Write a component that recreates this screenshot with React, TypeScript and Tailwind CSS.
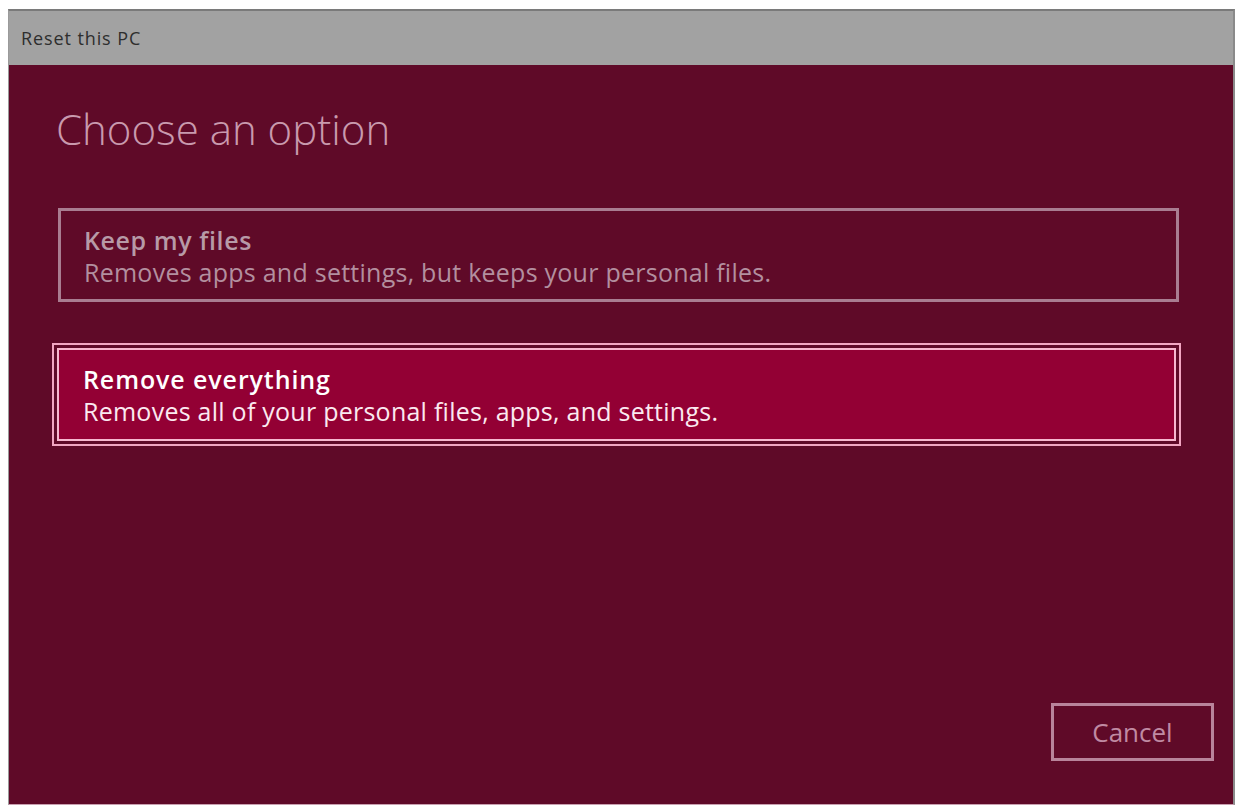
export default function App() {
  return (
    <div className="w-[1237px] h-[807px] bg-white pt-[9px] pl-[8px] pr-[2px] pb-[2px]" style={{ fontFamily: '"Open Sans", "Noto Sans", sans-serif' }}>
      <div className="w-full h-full flex flex-col border-t-2 border-[#7a7a7a] border-l border-r-2 border-r-[#8a8a8a] border-l-[#9a9a9a] border-b border-b-[#c9a0b0]">
        {/* title bar */}
        <div className="h-[54px] shrink-0 bg-[#a2a2a2] flex items-center pl-[12px] pt-[1px]">
          <span className="text-[18px] text-[#2e2e2e] tracking-[0.9px]">Reset this PC</span>
        </div>
        {/* body */}
        <div className="flex-1 bg-[#5f0a28] flex flex-col pl-[49px] pr-[54px]">
          <h1 className="mt-[34px] -ml-[2px] text-[42px] font-light text-[#c99aae] leading-[60px]">Choose an option</h1>

          <div className="mt-[49px] border-[3px] border-[#a97d91] h-[94px] flex flex-col justify-center pl-[23px] pt-[1px]">
            <div className="text-[25px] font-semibold text-[#b79aa7] leading-[32px] tracking-[0.6px]">Keep my files</div>
            <div className="text-[25px] text-[#b38f9f] leading-[32px] tracking-[0.25px]">Removes apps and settings, but keeps your personal files.</div>
          </div>

          <div className="mt-[41px] -ml-[6px] -mr-[2px] border-2 border-[#f2a6c2] p-[3px]">
            <div className="border-2 border-[#f7b7cf] bg-[#930034] h-[93px] flex flex-col justify-center pl-[24px]">
              <div className="text-[25px] font-semibold text-white leading-[32px] tracking-[0.9px]">Remove everything</div>
              <div className="text-[25px] text-[#fbe9f0] leading-[32px] tracking-[0.25px]">Removes all of your personal files, apps, and settings.</div>
            </div>
          </div>

          <div className="flex-1" />

          <div className="flex justify-end mb-[43px] -mr-[35px]">
            <div className="w-[163px] h-[58px] border-[3px] border-[#b9849b] flex items-center justify-center">
              <span className="text-[26px] text-[#c08aa3]">Cancel</span>
            </div>
          </div>
        </div>
      </div>
    </div>
  );
}
